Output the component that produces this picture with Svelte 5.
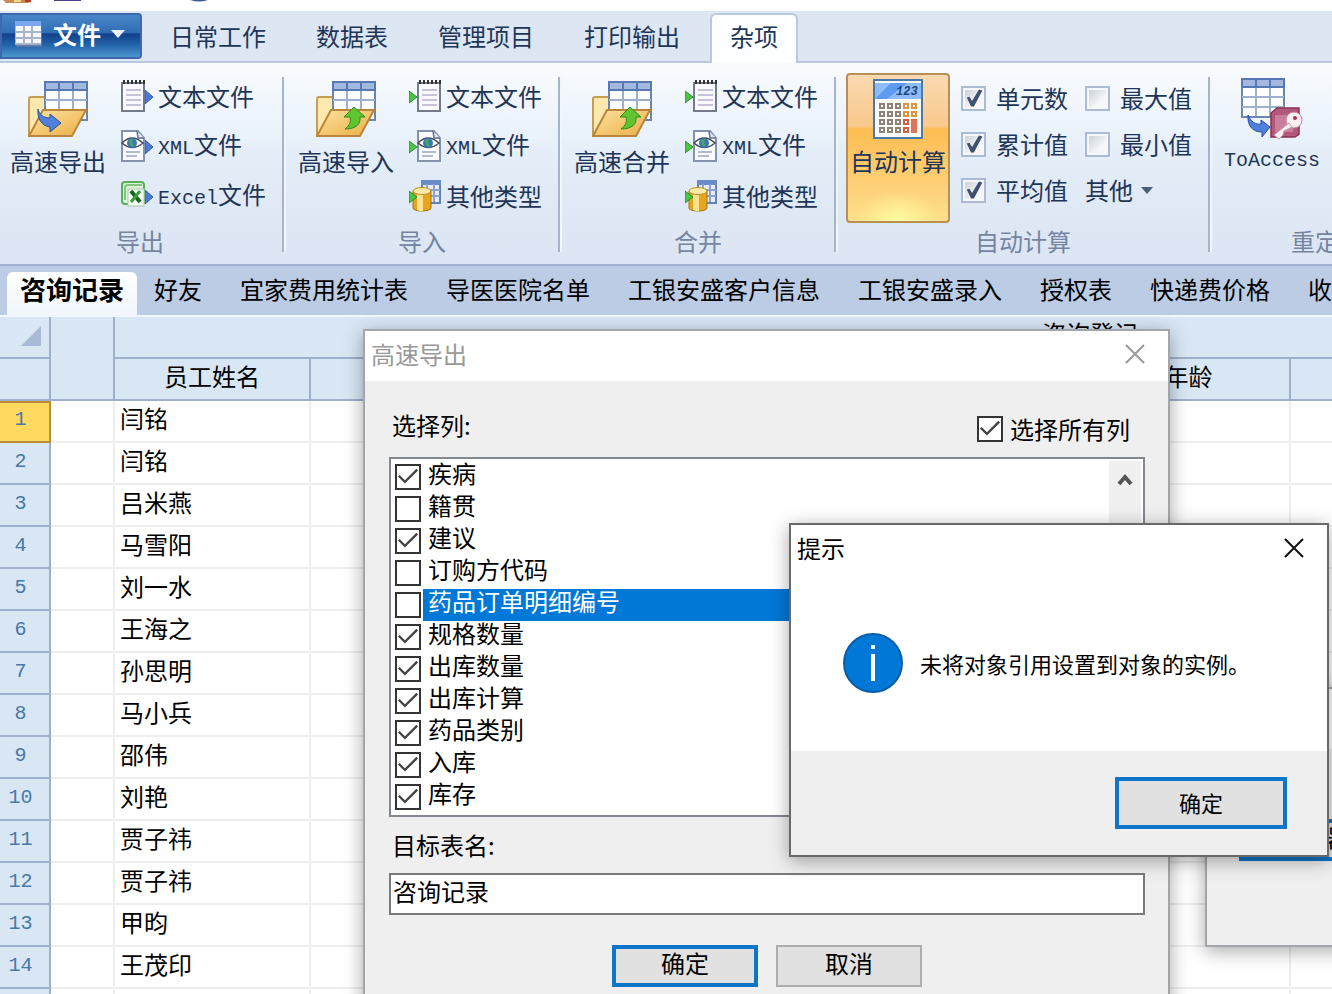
<script lang="ts">
  type FileKind = 'text' | 'xml' | 'excel' | 'other';

  interface FileAction {
    kind: FileKind;
    latin: string;
    label: string;
  }

  interface FileGroup {
    title: string;
    big: string;
    incoming: boolean;
    actions: FileAction[];
  }

  const menuTabs = ['日常工作', '数据表', '管理项目', '打印输出', '杂项'];
  let activeMenu = $state('杂项');

  const text: FileAction = { kind: 'text', latin: '', label: '文本文件' };
  const xml: FileAction = { kind: 'xml', latin: 'XML', label: '文件' };
  const excel: FileAction = { kind: 'excel', latin: 'Excel', label: '文件' };
  const other: FileAction = { kind: 'other', latin: '', label: '其他类型' };

  const fileGroups: FileGroup[] = [
    { title: '导出', big: '高速导出', incoming: false, actions: [text, xml, excel] },
    { title: '导入', big: '高速导入', incoming: true, actions: [text, xml, other] },
    { title: '合并', big: '高速合并', incoming: true, actions: [text, xml, other] },
  ];

  let calcLeft = $state([
    { label: '单元数', on: true },
    { label: '累计值', on: true },
    { label: '平均值', on: true },
  ]);
  let calcRight = $state([
    { label: '最大值', on: false },
    { label: '最小值', on: false },
  ]);

  const sheets = [
    '咨询记录', '好友', '宜家费用统计表', '导医医院名单', '工银安盛客户信息',
    '工银安盛录入', '授权表', '快递费价格', '收',
  ];
  let activeSheet = $state('咨询记录');

  const names = [
    '闫铭', '闫铭', '吕米燕', '马雪阳', '刘一水', '王海之', '孙思明', '马小兵',
    '邵伟', '刘艳', '贾子祎', '贾子祎', '甲昀', '王茂印', '',
  ];
  const restCols = [0, 1, 2, 3, 4, 5];

  let columns = $state([
    { label: '疾病', on: true },
    { label: '籍贯', on: false },
    { label: '建议', on: true },
    { label: '订购方代码', on: false },
    { label: '药品订单明细编号', on: false },
    { label: '规格数量', on: true },
    { label: '出库数量', on: true },
    { label: '出库计算', on: true },
    { label: '药品类别', on: true },
    { label: '入库', on: true },
    { label: '库存', on: true },
  ]);
  let selected = $state(4);
  let selectAll = $state(true);
  let target = $state('咨询记录');
</script>

<svelte:head><title>咨询记录</title></svelte:head>

{#snippet sheetGrid()}
  <rect x="1" y="1" width="42" height="38" fill="#fdfeff" stroke="#6d84ac" stroke-width="2" />
  <path d="M15 9V38M29 9V38M1 19H43M1 29H43" stroke="#9fb0cc" stroke-width="2" />
  <rect x="0" y="0" width="44" height="10" fill="#5878b4" />
  <path d="M2 2H14V8H2ZM16 2H28V8H16ZM30 2H42V8H30Z" fill="#a3b8de" />
{/snippet}

{#snippet folderIcon(incoming: boolean)}
  <svg width="60" height="56" viewBox="0 0 60 56" fill="none" aria-hidden="true">
    <defs>
      <linearGradient id="folderFront" x1="0" y1="0" x2="1" y2="1">
        <stop offset="0" stop-color="#ffe3a0" />
        <stop offset="1" stop-color="#e9ae45" />
      </linearGradient>
    </defs>
    <path d="M1 54V18q0-2 2-2h13q2 0 3 3l2 10H40V54Z" fill="#fde9ae" stroke="#c79d52" stroke-width="2" />
    <g transform="translate(16 0)">{@render sheetGrid()}</g>
    <path d="M1 55L15 29H58L44 55Z" fill="url(#folderFront)" stroke="#b9853c" stroke-width="2" />
    {#if incoming}
      <path d="M38 26L49 36H44C45 43 40 48 29 48C34 44 35 41 34 36H28Z" fill="#5fc52e" stroke="#2f8a1c" />
    {:else}
      <path d="M10 28C11 33 15 37 22 37V33L33 42L22 51V46C14 45 9 38 10 28Z" fill="#4f80dc" stroke="#2c4f9f" />
    {/if}
  </svg>
{/snippet}

{#snippet fileIcon(kind: FileKind, incoming: boolean)}
  <svg width="32" height="32" viewBox="0 0 32 32" fill="none" aria-hidden="true">
    {#if !incoming}
      <path d="M24 10L32 17L24 24Z" fill="#4b7ada" stroke="#3358a8" />
    {/if}
    <g transform={incoming && kind !== 'other' ? 'translate(8 0)' : undefined}>
      {#if kind === 'text'}
        <rect x="1" y="3" width="22" height="28" fill="#f8f8fd" stroke="#747a8b" stroke-width="2" />
        <path d="M2 2H24" stroke="#333" stroke-width="4" stroke-dasharray="2 2" />
        <path d="M5 10H20M5 15H20M5 20H20M5 25H20" stroke="#c6c2d8" stroke-width="2" />
      {:else if kind === 'xml'}
        <path d="M1 1H17L23 8V31H1Z" fill="#f9fbff" stroke="#8492aa" stroke-width="2" />
        <path d="M16 1L17 8H23" fill="#dfe6f1" stroke="#64728c" stroke-width="1.500" />
        <path d="M1 13Q11 3 22 13Q11 22 1 13Z" fill="#fff" stroke="#444c58" stroke-width="1.500" />
        <circle cx="11" cy="13" r="5" fill="#3c77b5" />
        <path d="M8 10L12 9L11 13L13 17L9 15Z" fill="#4bab58" />
        <path d="M5 22H19M5 26H16" stroke="#b1b9cf" stroke-width="2" />
      {:else if kind === 'excel'}
        <rect x="1" y="2" width="22" height="22" rx="3" fill="#dcf1d8" stroke="#5cae5f" stroke-width="2" />
        <path d="M4 20V8Q4 5 7 5H21" stroke="#82c67e" stroke-width="2" />
        <rect x="7" y="9" width="16" height="17" fill="#f6fbf4" stroke="#a7c9a5" />
        <path d="M10 11L19 22" stroke="#14641f" stroke-width="4" />
        <path d="M19 11L10 22" stroke="#39a03d" stroke-width="3" />
      {:else}
        <rect x="13" y="1" width="18" height="22" fill="#e4ecfa" stroke="#6580b5" stroke-width="2" />
        <rect x="12" y="0" width="20" height="5" fill="#6b8aca" />
        <path d="M18 4V22M25 4V22M13 10H31M13 16H31" stroke="#8ea2cb" stroke-width="2" />
        <path d="M4 11V28C4 32 22 32 22 28V11Z" fill="#e6a51c" stroke="#a3700f" />
        <path d="M8 13V30C10 31 13 31 14 31V14Z" fill="#fbe190" />
        <ellipse cx="13" cy="11" rx="9" ry="3.500" fill="#fbe9a6" stroke="#bd8b28" />
      {/if}
    </g>
    {#if incoming}
      <path d="M0 11L8 17L0 23Z" fill="#4cc444" stroke="#269030" />
    {/if}
  </svg>
{/snippet}

{#snippet cross(stroke: string)}
  <svg width="20" height="20" viewBox="0 0 20 20" aria-hidden="true">
    <path d="M1 1L19 19M19 1L1 19" {stroke} stroke-width="2" />
  </svg>
{/snippet}

<div class="desktop">
  <!-- Bottom edge of the quick access bar -->
  <div class="title-strip">
    <svg width="210" height="3" viewBox="0 0 210 3" aria-hidden="true">
      <path d="M3 0H31V2L28 3H6Z" fill="#c98a55" />
      <path d="M14 0H21V2H14Z" fill="#f3d98a" />
      <path d="M25 0H31V2H25Z" fill="#b03a2c" />
      <path d="M54 0H81V1H54Z" fill="#4f3f86" />
      <path d="M190 0H208Q199 3 190 0Z" fill="#3d5c98" />
    </svg>
  </div>

  <nav class="menu-bar">
    <button class="file-button">
      <svg width="28" height="26" viewBox="0 0 28 26" aria-hidden="true">
        <rect x="1" y="1" width="26" height="25" fill="#5a78ad" />
        <rect x="0" y="0" width="26" height="24" fill="#f4f6fb" />
        <rect x="0" y="0" width="26" height="5" fill="#7ba6f0" />
        <path d="M0 11H26M0 17H26M9 5V24M17 5V24M0 5V24M0 23H26" stroke="#a8b4c9" stroke-width="2" />
      </svg>
      <span>文件</span>
      <svg width="14" height="8" viewBox="0 0 14 8" aria-hidden="true">
        <path d="M0 0H14L7 8Z" fill="#edf2fa" />
      </svg>
    </button>
    <div class="menu-tabs">
      {#each menuTabs as tab}
        <button class="menu-tab" class:active={tab === activeMenu} onclick={() => (activeMenu = tab)}>{tab}</button>
      {/each}
    </div>
  </nav>

  <section class="ribbon">
    {#each fileGroups as group}
      <div class="group">
        <div class="group-body">
          <button class="big-button">
            <span class="big-icon">{@render folderIcon(group.incoming)}</span>
            <span class="big-label">{group.big}</span>
          </button>
          <div class="small-list">
            {#each group.actions as action}
              <button class="small-button">
                {@render fileIcon(action.kind, group.incoming)}
                <span>{#if action.latin}<span class="latin">{action.latin}</span>{/if}{action.label}</span>
              </button>
            {/each}
          </div>
        </div>
        <div class="group-title">{group.title}</div>
      </div>
      <span class="divider"></span>
    {/each}

    <div class="group">
      <div class="group-body">
        <button class="big-button pressed">
          <span class="big-icon">
            <svg width="50" height="60" viewBox="0 0 50 60" aria-hidden="true">
              <rect x="1" y="1" width="48" height="58" fill="#fbfbf8" stroke="#4b79a8" stroke-width="2" />
              <rect x="2" y="4" width="46" height="16" fill="#8ebcf8" />
              <path d="M2 20L18 4H34L14 20Z" fill="#5d9af1" />
              <text x="23" y="16" class="calc-digits">123</text>
              {#each [0, 1, 2, 3] as row}
                {#each [0, 1, 2, 3, 4] as col}
                  <rect
                    x={7 + col * 8}
                    y={25 + row * 8}
                    width="4"
                    height="4"
                    fill="#fff"
                    stroke={col < 3 ? '#8c8478' : row < 2 ? '#dc9440' : '#cf6040'}
                    stroke-width="2"
                  />
                {/each}
              {/each}
              <rect x="38" y="41" width="6" height="13" fill="#e0735c" />
            </svg>
          </span>
          <span class="big-label">自动计算</span>
        </button>
        <div class="calc-list">
          {#each calcLeft as item}
            <label class="calc-item"><input type="checkbox" class="soft-check" bind:checked={item.on} />{item.label}</label>
          {/each}
        </div>
        <div class="calc-list">
          {#each calcRight as item}
            <label class="calc-item"><input type="checkbox" class="soft-check" bind:checked={item.on} />{item.label}</label>
          {/each}
          <button class="calc-more">
            其他
            <svg width="12" height="7" viewBox="0 0 12 7" aria-hidden="true">
              <path d="M0 0H12L6 7Z" fill="#4c5d78" />
            </svg>
          </button>
        </div>
      </div>
      <div class="group-title">自动计算</div>
    </div>
    <span class="divider"></span>

    <div class="group last">
      <div class="group-body">
        <button class="big-button">
          <span class="big-icon">
            <svg width="62" height="62" viewBox="0 0 62 62" fill="none" aria-hidden="true">
              {@render sheetGrid()}
              <path d="M7 37C10 44 15 47 20 46V42L29 49L21 59V54C12 54 6 48 7 37Z" fill="#4f80dc" stroke="#2c4f9f" />
              <path d="M30 35L36 30H58V56L54 59H30Z" fill="#b4587b" stroke="#8c2f55" stroke-width="1.500" />
              <path d="M34 37H52V54H34Z" fill="#cb7e9b" />
              <circle cx="53" cy="42" r="8" fill="#f9eef2" stroke="#c0849c" />
              <circle cx="54" cy="40" r="2" fill="#a8325c" />
              <path d="M48 45L33 57L38 61L42 57L43 53L51 49Z" fill="#f9eef2" stroke="#c0a0ac" />
            </svg>
          </span>
          <span class="big-label latin">ToAccess</span>
        </button>
      </div>
      <div class="group-title">重定</div>
    </div>
  </section>

  <nav class="sheet-bar">
    {#each sheets as sheet}
      <button class="sheet-tab" class:active={sheet === activeSheet} onclick={() => (activeSheet = sheet)}>{sheet}</button>
    {/each}
  </nav>

  <table class="grid">
    <colgroup>
      <col class="c-index" />
      <col class="c-flag" />
      <col class="c-name" />
      <col class="c-mid" />
      <col class="c-mid" />
      <col class="c-mid" />
      <col class="c-age" />
      <col class="c-wide" />
      <col class="c-wide" />
    </colgroup>
    <thead>
      <tr class="band-row">
        <th class="corner">
          <svg width="20" height="20" viewBox="0 0 20 20" aria-hidden="true">
            <path d="M20 0V20H0Z" fill="#a9bad6" />
          </svg>
        </th>
        <th rowspan="2"></th>
        <th colspan="7" class="band">咨询登记</th>
      </tr>
      <tr>
        <th></th>
        <th>员工姓名</th>
        <th></th>
        <th></th>
        <th></th>
        <th>年龄</th>
        <th></th>
        <th></th>
      </tr>
    </thead>
    <tbody>
      {#each names as name, i}
        <tr>
          <th class="index" class:current={i === 0}>{name ? i + 1 : ''}</th>
          <td></td>
          <td>{name}</td>
          {#each restCols as _}<td></td>{/each}
        </tr>
      {/each}
    </tbody>
  </table>

  <!-- Window that sits behind the others -->
  <div class="window back-window">
    <div class="back-title"></div>
    <div class="back-body"><button class="push default">器</button></div>
  </div>

  <div class="window export-window" role="dialog" aria-labelledby="export-title">
    <header class="window-title muted">
      <span id="export-title">高速导出</span>
      <button class="close" aria-label="关闭">{@render cross('#999')}</button>
    </header>
    <div class="export-body">
      <div class="export-head">
        <span class="list-caption">选择列:</span>
        <label class="select-all"><input type="checkbox" class="check" bind:checked={selectAll} />选择所有列</label>
      </div>
      <div class="list-box">
        <div class="list-items">
          {#each columns as column, i}
            <label class="list-item" class:selected={i === selected}>
              <input type="checkbox" class="check" bind:checked={column.on} onfocus={() => (selected = i)} />
              <span>{column.label}</span>
            </label>
          {/each}
        </div>
        <div class="scroll-track">
          <svg width="16" height="14" viewBox="0 0 16 14" aria-hidden="true">
            <path d="M2 11L8 4L14 11" fill="none" stroke="#555" stroke-width="4" />
          </svg>
        </div>
      </div>
      <label class="target-label" for="target-name">目标表名:</label>
      <input id="target-name" class="target-input" type="text" bind:value={target} />
      <div class="export-actions">
        <button class="push default">确定</button>
        <button class="push">取消</button>
      </div>
    </div>
  </div>

  <div class="window message-window" role="alertdialog" aria-labelledby="message-title">
    <header class="window-title">
      <span id="message-title">提示</span>
      <button class="close" aria-label="关闭">{@render cross('#111')}</button>
    </header>
    <div class="message-body">
      <svg width="60" height="60" viewBox="0 0 60 60" aria-hidden="true">
        <circle cx="30" cy="30" r="29" fill="#0078d7" stroke="#0b5ea6" stroke-width="2" />
        <path d="M30 12V16M30 21V48" stroke="#fff" stroke-width="4" />
      </svg>
      <p>未将对象引用设置到对象的实例。</p>
    </div>
    <footer class="message-footer">
      <button class="push default">确定</button>
    </footer>
  </div>
</div>

<style>
  :global(body) { margin: 0; overflow: hidden; }

  .desktop {
    position: relative;
    height: 100vh;
    overflow: hidden;
    background: #fff;
    color: #000;
    font-family: 'Noto Sans CJK SC', sans-serif;
    font-size: 24px;
    line-height: 32px;
  }

  button, input { font: inherit; color: inherit; margin: 0; }
  button { padding: 0; border: 0; background: none; white-space: nowrap; }
  svg { display: block; flex: none; }

  .latin { font-family: 'Liberation Mono', monospace; font-size: 20px; }

  .title-strip { height: 11px; }

  /* Menu bar */
  .menu-bar {
    display: flex;
    align-items: flex-start;
    gap: 8px;
    height: 50px;
    padding-top: 2px;
    box-sizing: content-box;
    background: #dde7f4;
    box-shadow: inset 0 -2px #b9c8de;
    color: #1f3557;
  }

  .file-button {
    display: flex;
    align-items: center;
    gap: 10px;
    width: 142px;
    height: 46px;
    padding: 0 0 4px 13px;
    border: 2px solid #3d68ac;
    border-radius: 0 4px 4px 0;
    background: linear-gradient(#4a86c8, #2f6db4 42%, #12408a 45%, #2262a8 70%, #4b96d0);
    color: #fff;
    font-weight: 700;
  }

  .menu-tabs { display: flex; gap: 10px; height: 48px; }
  .menu-tab {
    padding: 0 18px 4px;
    border: 2px solid transparent;
    border-bottom: 0;
  }
  .menu-tab.active {
    position: relative;
    height: 50px;
    padding-bottom: 6px;
    border-color: #b9c8de;
    border-radius: 6px 6px 0 0;
    background: #fdfeff;
  }

  /* Ribbon */
  .ribbon {
    display: flex;
    height: 191px;
    padding-top: 10px;
    border-bottom: 2px solid #9fb1cd;
    background: linear-gradient(#f9fcff, #e3edf8 50%, #dbe5f3);
    color: #1f3557;
    overflow: hidden;
  }

  .group { flex: none; padding: 0 16px 0 10px; }
  .group:first-child { padding-left: 6px; }
  .group.last { width: 182px; }
  .group-body { display: flex; gap: 11px; height: 150px; }
  .group-title { padding-left: 8px; color: #75859f; text-align: center; line-height: 36px; }

  .divider {
    flex: none;
    width: 2px;
    margin: 4px 0 12px;
    background: #a5b4cb;
    box-shadow: 2px 0 #f2f7fd;
  }

  .big-button {
    box-sizing: border-box;
    width: 104px;
    height: 150px;
    padding-top: 4px;
    border: 2px solid transparent;
    border-radius: 4px;
    display: flex;
    flex-direction: column;
    align-items: center;
  }
  .big-button.pressed {
    border-color: #b5905a;
    background:
      radial-gradient(ellipse at 50% 100%, #fffba0, transparent 60%) bottom / 100% 24% no-repeat,
      linear-gradient(#fad9b0, #f9c98c 35%, #fdbd52 37%, #fdd078 75%, #fde08a);
  }
  .big-icon { display: flex; align-items: center; height: 60px; }
  .big-label { margin-top: 6px; line-height: 32px; }

  .calc-digits { font: italic 700 12px 'Liberation Mono', monospace; fill: #20457e; }

  .small-list { display: flex; flex-direction: column; }
  .small-button {
    box-sizing: border-box;
    display: flex;
    align-items: center;
    gap: 5px;
    height: 50px;
    padding-bottom: 4px;
  }

  .calc-list { padding-top: 2px; }
  .calc-list + .calc-list { margin-left: 6px; }
  .calc-item { display: flex; align-items: center; gap: 10px; height: 46px; white-space: nowrap; }
  .calc-more { display: flex; align-items: center; gap: 8px; height: 46px; }

  .soft-check {
    appearance: none;
    box-sizing: border-box;
    width: 25px;
    height: 25px;
    border: 2px solid #abbbd3;
    background: linear-gradient(135deg, #ccd1d9, #f6f7f9 70%) center / 17px 17px no-repeat #f5f7fa;
  }
  .soft-check:checked::before {
    content: '';
    display: block;
    height: 21px;
    background: #3f5170;
    clip-path: polygon(18% 48%, 30% 44%, 43% 64%, 76% 10%, 92% 14%, 52% 90%, 38% 90%);
  }

  /* Sheet tabs */
  .sheet-bar {
    display: flex;
    align-items: flex-end;
    height: 51px;
    padding-left: 7px;
    background: #bbcce4;
    box-shadow: inset 0 -2px #f1f7fd;
    overflow: hidden;
  }
  .sheet-tab { flex: none; height: 45px; padding: 0 19px 12px; }
  .sheet-tab.active {
    margin-right: -2px;
    padding: 0 13px 12px;
    border-radius: 6px 6px 0 0;
    background: linear-gradient(#fff, #eff6fd);
    font-size: 26px;
    font-weight: 700;
  }

  /* Data grid */
  .grid {
    table-layout: fixed;
    width: 2067px;
    border-collapse: separate;
    border-spacing: 0;
  }
  .c-index { width: 51px; }
  .c-flag { width: 64px; }
  .c-name { width: 196px; }
  .c-mid { width: 259px; }
  .c-age { width: 203px; }
  .c-wide { width: 388px; }

  .grid th, .grid td {
    box-sizing: border-box;
    height: 42px;
    padding: 0 0 6px;
    line-height: 30px;
    white-space: nowrap;
    font-weight: 400;
  }
  .grid th {
    border-right: 2px solid #9fb0cb;
    border-bottom: 2px solid #9fb0cb;
    background: #d9e7f5;
  }
  .grid td {
    padding-left: 5px;
    border-right: 2px solid #eee;
    border-bottom: 2px solid #eee;
  }
  .grid .corner svg { margin: 4px 0 0 21px; }
  .grid .band { padding-bottom: 8px; }
  .grid .index {
    padding: 0 8px 2px 0;
    color: #4779a5;
    font-family: 'Liberation Mono', monospace;
    font-size: 20px;
  }
  .grid .index.current {
    border-color: #b98d3e;
    background: #ffd960;
    box-shadow: inset 0 2px #b98d3e;
  }

  /* Windows */
  .window {
    position: absolute;
    box-sizing: border-box;
    border: 2px solid #a2a5a9;
    background: #efefef;
    box-shadow: 0 4px 18px rgba(0, 0, 0, 0.35);
  }
  .window-title {
    box-sizing: border-box;
    display: flex;
    align-items: center;
    justify-content: space-between;
    height: 50px;
    padding: 0 23px 4px 6px;
    background: #fff;
  }
  .window-title.muted { color: #999; }

  .push {
    box-sizing: border-box;
    width: 146px;
    height: 42px;
    padding-bottom: 6px;
    border: 2px solid #adadad;
    background: #e1e1e1;
    line-height: 28px;
  }
  .push.default { border: 4px solid #0f75c8; }

  .check {
    appearance: none;
    box-sizing: border-box;
    flex: none;
    width: 26px;
    height: 26px;
    border: 2px solid #333;
    background: #fff;
  }
  .check:checked::before {
    content: '';
    display: block;
    height: 22px;
    background: #444;
    clip-path: polygon(4% 48%, 12% 41%, 36% 65%, 88% 13%, 96% 21%, 36% 80%);
  }

  .back-window { left: 1205px; top: 687px; width: 360px; height: 260px; }
  .back-title { height: 60px; background: #fff; }
  .back-body { padding: 70px 32px; }
  .back-body .push { width: 200px; }

  .export-window { left: 363px; top: 329px; width: 807px; }
  .export-body { padding: 20px 23px 24px 24px; }
  .export-head {
    display: flex;
    align-items: center;
    justify-content: space-between;
    height: 56px;
    padding: 0 15px 0 3px;
  }
  .list-caption { padding-bottom: 8px; }
  .select-all { display: flex; align-items: center; gap: 7px; }

  .list-box {
    display: flex;
    padding: 2px;
    border: 2px solid #828790;
    background: #fff;
  }
  .list-items { flex: 1; }
  .list-item { display: flex; align-items: center; height: 32px; padding-left: 2px; }
  .list-item span { flex: 1; height: 32px; margin-left: 2px; padding-left: 5px; line-height: 24px; }
  .list-item.selected span { background: #0078d7; color: #fff; }
  .scroll-track {
    display: flex;
    justify-content: center;
    width: 32px;
    padding-top: 12px;
    background: #f0f0f0;
    box-sizing: border-box;
  }

  .target-label { display: block; padding-left: 3px; line-height: 56px; }
  .target-input {
    display: block;
    box-sizing: border-box;
    width: 100%;
    height: 42px;
    padding: 0 2px 8px;
    border: 2px solid #7a7a7a;
    background: #fff;
  }
  .export-actions { display: flex; justify-content: center; gap: 18px; padding-top: 30px; }

  .message-window {
    left: 789px;
    top: 523px;
    width: 540px;
    border-color: #696969;
    font-size: 22px;
  }
  .message-window .window-title { font-size: 24px; }
  .message-body {
    display: flex;
    align-items: center;
    gap: 17px;
    height: 176px;
    padding-left: 52px;
    background: #fff;
  }
  .message-body p { margin: 0; }
  .message-footer { display: flex; justify-content: flex-end; padding: 26px 40px; }
  .message-footer .push { width: 172px; height: 52px; padding-bottom: 2px; }
</style>
